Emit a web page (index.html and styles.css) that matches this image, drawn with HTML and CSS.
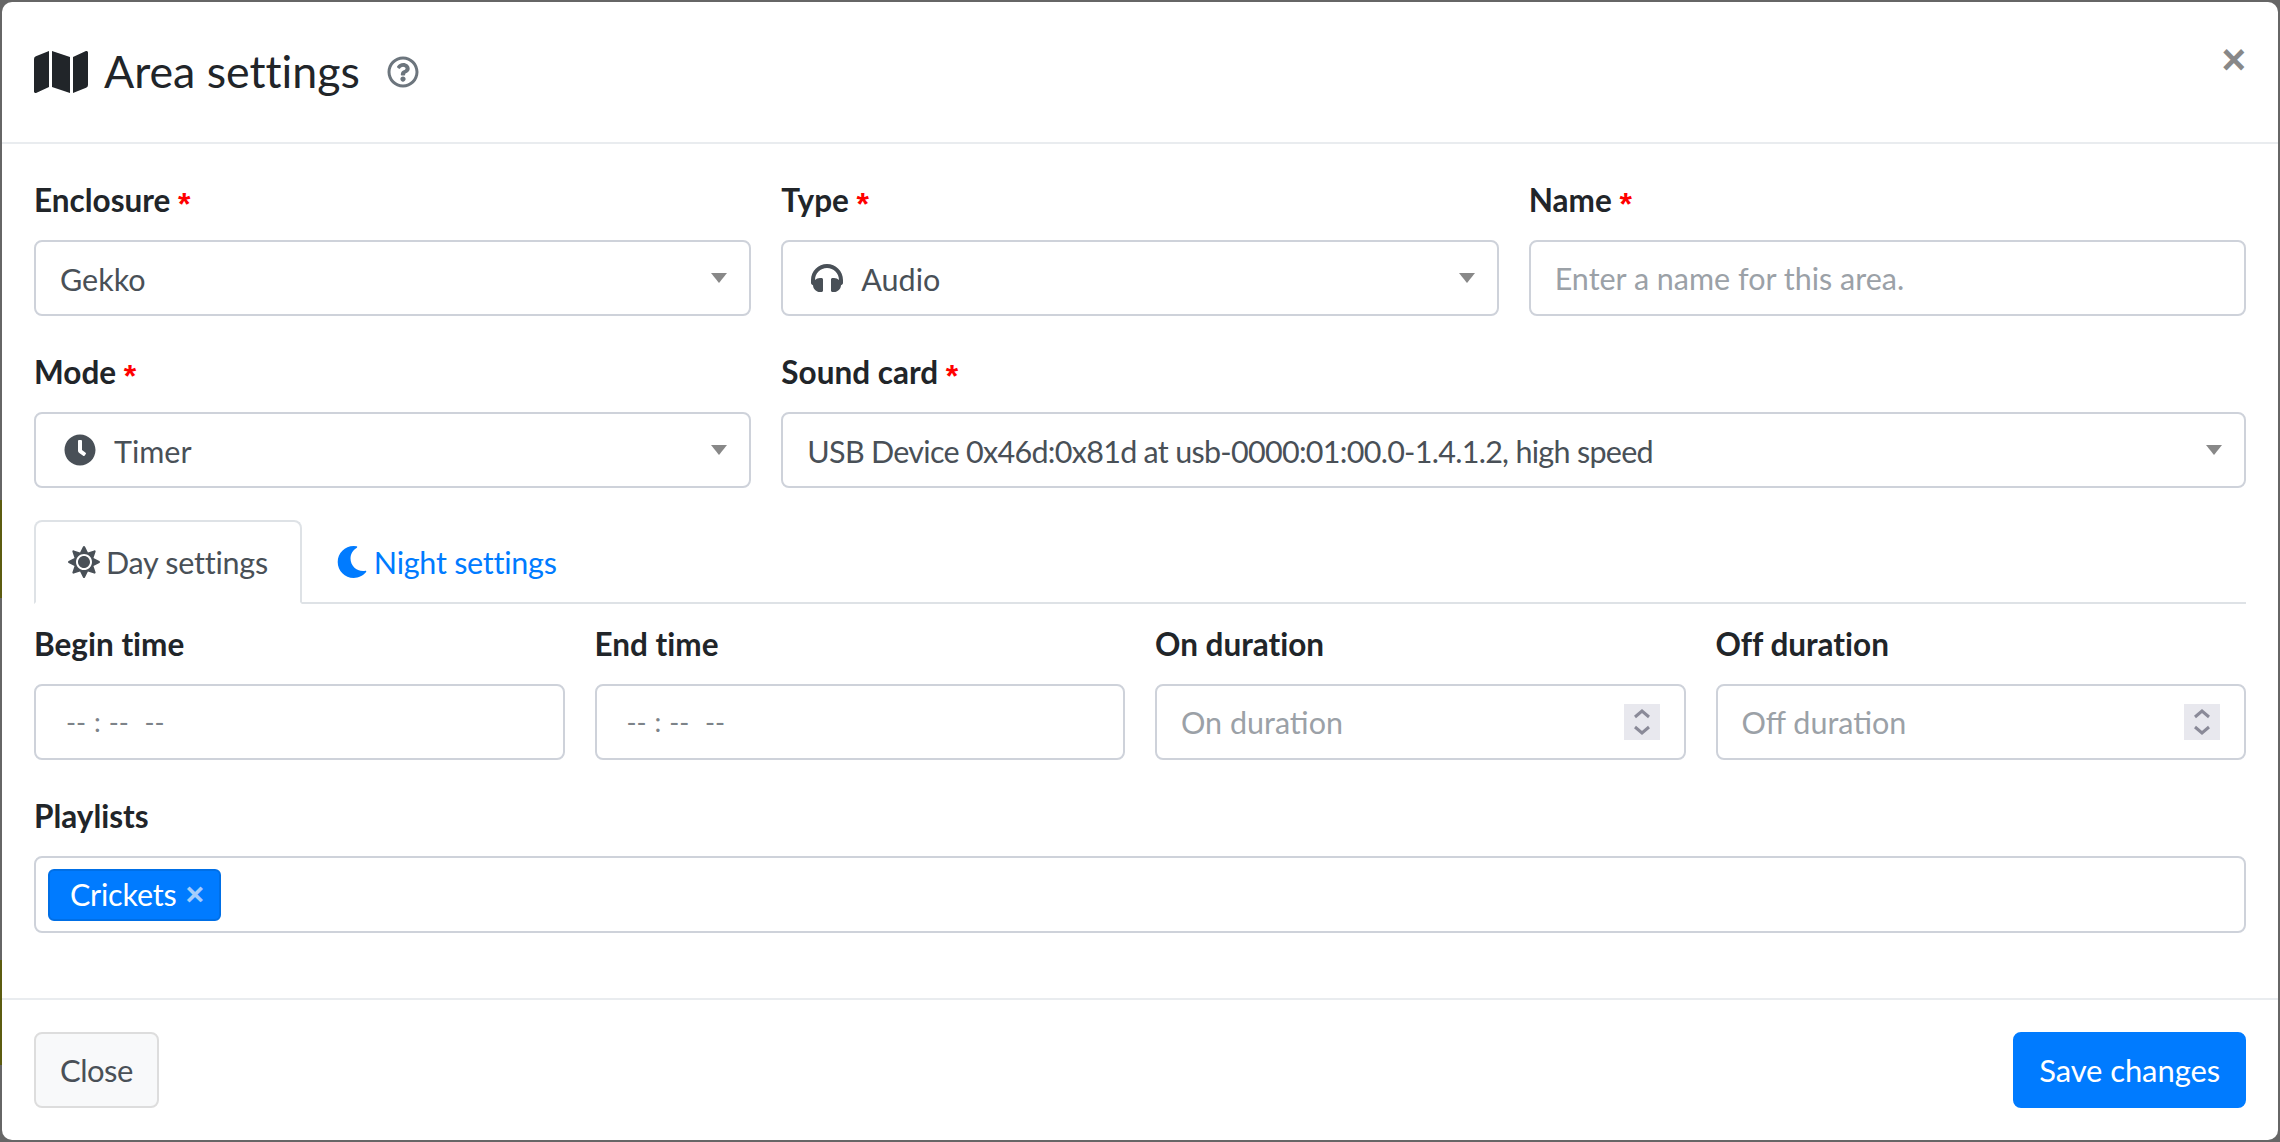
FILE: index.html
```html
<!DOCTYPE html>
<html lang="en">
<head>
    <meta charset="UTF-8">
    <meta name="viewport" content="width=device-width, initial-scale=1.0">
    <title>Area settings</title>

    <link rel="stylesheet" href="styles.css">
</head>
<body>
    <div class="modal">
        <div class="modal-header">
            <svg class="title-icon" viewBox="0 0 576 512"><path d="M0 117.66v346.32c0 11.32 11.43 19.06 21.94 14.86L160 416V32L20.12 87.95A32.006 32.006 0 0 0 0 117.66zM192 416l192 64V96L192 32v384zM554.06 33.16L416 96v384l139.88-55.95A31.996 31.996 0 0 0 576 394.34V48.02c0-11.32-11.43-19.06-21.94-14.86z"/></svg>
            <h5 class="modal-title">Area settings</h5>
            <svg class="help-icon" viewBox="0 0 512 512"><path d="M256 8C119.043 8 8 119.083 8 256c0 136.997 111.043 248 248 248s248-111.003 248-248C504 119.083 392.957 8 256 8zm0 448c-110.532 0-200-89.431-200-200 0-110.495 89.472-200 200-200 110.491 0 200 89.471 200 200 0 110.53-89.431 200-200 200zm107.244-255.2c0 67.052-72.421 68.084-72.421 92.863V300c0 6.627-5.373 12-12 12h-45.647c-6.627 0-12-5.373-12-12v-8.659c0-35.745 27.1-50.034 47.579-61.516 17.561-9.845 28.324-16.541 28.324-29.579 0-17.246-21.999-28.693-39.784-28.693-23.189 0-33.894 10.977-48.942 29.969-4.057 5.12-11.46 6.071-16.666 2.124l-27.824-21.098c-5.107-3.872-6.251-11.066-2.644-16.363C184.846 131.491 214.94 112 261.794 112c49.071 0 101.45 38.304 101.45 88.8zM298 368c0 23.159-18.841 42-42 42s-42-18.841-42-42 18.841-42 42-42 42 18.841 42 42z"/></svg>
            <button class="close" type="button">&times;</button>
        </div>

        <div class="modal-body">
            <div class="row row-3">
                <div class="form-group">
                    <label>Enclosure <span class="required">*</span></label>
                    <div class="select-box">
                        <span class="select-text">Gekko</span>
                        <span class="select-arrow"></span>
                    </div>
                </div>
                <div class="form-group">
                    <label>Type <span class="required">*</span></label>
                    <div class="select-box">
                        <svg class="select-icon" viewBox="0 0 512 512"><path d="M256 32C114.52 32 0 146.496 0 288v48a32 32 0 0 0 17.689 28.622l14.383 7.191C34.083 431.903 83.421 480 144 480h24c13.255 0 24-10.745 24-24V280c0-13.255-10.745-24-24-24h-24c-31.342 0-59.671 12.879-80 33.627V288c0-105.869 86.131-192 192-192s192 86.131 192 192v1.627C427.671 268.879 399.342 256 368 256h-24c-13.255 0-24 10.745-24 24v176c0 13.255 10.745 24 24 24h24c60.579 0 109.917-48.098 111.928-108.187l14.382-7.191A32 32 0 0 0 512 336v-48c0-141.504-114.52-256-256-256z"/></svg>
                        <span class="select-text">Audio</span>
                        <span class="select-arrow"></span>
                    </div>
                </div>
                <div class="form-group">
                    <label>Name <span class="required">*</span></label>
                    <input class="form-control" type="text" placeholder="Enter a name for this area.">
                </div>
            </div>

            <div class="row row-3">
                <div class="form-group">
                    <label>Mode <span class="required">*</span></label>
                    <div class="select-box">
                        <svg class="select-icon" viewBox="0 0 512 512"><path d="M256,8C119,8,8,119,8,256S119,504,256,504,504,393,504,256,393,8,256,8Zm92.49,313h0l-20,25a16,16,0,0,1-22.49,2.5h0l-67-49.72a40,40,0,0,1-15-31.23V112a16,16,0,0,1,16-16h32a16,16,0,0,1,16,16V256l58,42.5A16,16,0,0,1,348.49,321Z"/></svg>
                        <span class="select-text">Timer</span>
                        <span class="select-arrow"></span>
                    </div>
                </div>
                <div class="form-group span-2">
                    <label>Sound card <span class="required">*</span></label>
                    <div class="select-box">
                        <span class="select-text device-name">USB Device 0x46d:0x81d at usb-0000:01:00.0-1.4.1.2, high speed</span>
                        <span class="select-arrow"></span>
                    </div>
                </div>
            </div>

            <ul class="tabs">
                <li class="tab active">
                    <svg class="tab-icon" viewBox="0 0 512 512"><path d="M256 160c-52.9 0-96 43.1-96 96s43.1 96 96 96 96-43.1 96-96-43.1-96-96-96zm246.4 80.5l-94.7-47.3 33.5-100.4c4.5-13.6-8.4-26.5-21.9-21.9l-100.4 33.5-47.4-94.8c-6.4-12.8-24.6-12.8-31 0l-47.3 94.7L92.7 70.8c-13.6-4.5-26.5 8.4-21.9 21.9l33.5 100.4-94.7 47.4c-12.8 6.4-12.8 24.6 0 31l94.7 47.3-33.5 100.5c-4.5 13.6 8.4 26.5 21.9 21.9l100.4-33.5 47.3 94.7c6.4 12.8 24.6 12.8 31 0l47.3-94.7 100.4 33.5c13.6 4.5 26.5-8.4 21.9-21.9l-33.5-100.4 94.7-47.3c13-6.5 13-24.7.2-31.1zm-155.9 106c-49.9 49.9-131.1 49.9-181 0-49.9-49.9-49.9-131.1 0-181 49.9-49.9 131.1-49.9 181 0 49.9 49.9 49.9 131.1 0 181z"/></svg>
                    Day settings
                </li>
                <li class="tab">
                    <svg class="tab-icon" viewBox="0 0 512 512"><path d="M283.211 512c78.962 0 151.079-35.925 198.857-94.792 7.068-8.708-.639-21.43-11.562-19.35-124.203 23.654-238.262-71.576-238.262-196.954 0-72.222 38.662-138.635 101.498-174.394 9.686-5.512 7.25-20.197-3.756-22.23A258.156 258.156 0 0 0 283.211 0c-141.309 0-256 114.511-256 256 0 141.309 114.511 256 256 256z"/></svg>
                    Night settings
                </li>
            </ul>

            <div class="row row-4">
                <div class="form-group">
                    <label>Begin time</label>
                    <div class="time-box">-- : -- &nbsp;--</div>
                </div>
                <div class="form-group">
                    <label>End time</label>
                    <div class="time-box">-- : -- &nbsp;--</div>
                </div>
                <div class="form-group">
                    <label>On duration</label>
                    <div class="number-box">
                        <input type="text" placeholder="On duration">
                        <span class="spinner">
                            <svg viewBox="0 0 36 36"><path d="M11 13l7-6 7 6M11 23l7 6 7-6"/></svg>
                        </span>
                    </div>
                </div>
                <div class="form-group">
                    <label>Off duration</label>
                    <div class="number-box">
                        <input type="text" placeholder="Off duration">
                        <span class="spinner">
                            <svg viewBox="0 0 36 36"><path d="M11 13l7-6 7 6M11 23l7 6 7-6"/></svg>
                        </span>
                    </div>
                </div>
            </div>

            <div class="form-group">
                <label>Playlists</label>
                <div class="tag-box">
                    <span class="tag">Crickets <span class="tag-remove">&times;</span></span>
                </div>
            </div>
        </div>

        <div class="modal-footer">
            <button class="btn btn-light" type="button">Close</button>
            <button class="btn btn-primary" type="button">Save changes</button>
        </div>
    </div>
</body>
</html>
```

FILE: styles.css
```css
* {
    box-sizing: border-box;
}

html,
body {
    height: 100%;
}

body {
    margin: 0;
    padding: 2px;
    background: linear-gradient(#666 500px, #5c5c10 500px, #5c5c10 598px, #666 598px, #666 960px, #5c5c10 960px, #5c5c10 1065px, #666 1065px) 0 0 / 2px 100% no-repeat, #666;
    font-family: Lato, "Open Sans", sans-serif;
    font-size: 30.5px;
    line-height: 48px;
    color: #212529;
    font-variant-ligatures: none;
}

.modal {
    display: flex;
    flex-direction: column;
    height: 1138px;
    background-color: white;
    border-radius: 10px;
    overflow: hidden;
}

.modal-header {
    display: flex;
    flex-shrink: 0;
    align-items: center;
    height: 142px;
    padding: 0 32px;
    border-bottom: 2px solid #e9ecef;
}

.title-icon {
    width: 54px;
    height: 48px;
    fill: #212529;
}

.modal-title {
    margin: -2px 0 0 16px;
    font-size: 44.7px;
    font-weight: 400;
    line-height: 60px;
}

.help-icon {
    width: 32px;
    height: 32px;
    margin-left: 27px;
    fill: #6c757d;
}

.close {
    align-self: flex-start;
    margin: 37px 0 0 auto;
    padding: 0;
    border: none;
    background: none;
    font-family: "Liberation Sans", sans-serif;
    font-size: 42px;
    font-weight: bold;
    line-height: 1;
    color: #888;
    cursor: pointer;
}

.modal-body {
    flex: 1;
    padding: 32px;
}

.row {
    display: grid;
    column-gap: 30px;
}

.row-3 {
    grid-template-columns: repeat(3, 1fr);
}

.row-4 {
    grid-template-columns: repeat(4, 1fr);
}

.span-2 {
    grid-column: span 2;
}

.form-group {
    margin-bottom: 32px;
}

label {
    display: block;
    height: 48px;
    margin-bottom: 16px;
    font-size: 31.5px;
    font-weight: bold;
}

.required {
    font-family: "Liberation Sans", sans-serif;
    font-size: 32px;
    vertical-align: -3px;
    color: red;
}

.select-box,
.form-control,
.time-box,
.number-box {
    display: flex;
    align-items: center;
    width: 100%;
    height: 76px;
    padding: 0 24px;
    background-color: white;
    border: 2px solid #ced2da;
    border-radius: 8px;
    font-family: inherit;
    font-size: inherit;
    color: #495057;
}

.select-box {
    padding-right: 22px;
}

.select-icon {
    width: 32px;
    height: 32px;
    margin-left: 4px;
    margin-right: 18px;
    fill: #495057;
}

.select-text {
    flex: 1;
    margin-top: 2px;
}

.device-name {
    letter-spacing: -0.71px;
}

.select-arrow {
    width: 0;
    height: 0;
    border-style: solid;
    border-width: 10px 8px 0 8px;
    border-color: #888 transparent transparent transparent;
}

input::placeholder {
    color: #9ba1a7;
    opacity: 1;
}

.time-box {
    padding-left: 30px;
    font-size: 27px;
    color: #7d8389;
    word-spacing: 1px;
}

.number-box input {
    flex: 1;
    min-width: 0;
    padding: 0;
    border: none;
    outline: none;
    font-family: inherit;
    font-size: inherit;
}

.spinner {
    width: 36px;
    height: 36px;
    background-color: #e8e8ee;
}

.spinner svg {
    display: block;
    width: 36px;
    height: 36px;
    fill: none;
    stroke: #8a8a98;
    stroke-width: 3;
}

.tabs {
    display: flex;
    margin: 0 0 16px 0;
    padding: 0;
    list-style: none;
    border-bottom: 2px solid #dee2e6;
}

.tab {
    display: flex;
    align-items: center;
    margin-bottom: -2px;
    padding: 16px 32px;
    border: 2px solid transparent;
    border-radius: 8px 8px 0 0;
    color: #007bff;
    letter-spacing: -0.25px;
}

.tab.active {
    background-color: white;
    border-color: #dee2e6 #dee2e6 white;
    color: #495057;
}

.tab-icon {
    width: 32px;
    height: 32px;
    margin-right: 6px;
    fill: currentColor;
}

.tag-box {
    display: flex;
    align-items: center;
    height: 77px;
    padding: 0 12px;
    border: 2px solid #ced2da;
    border-radius: 8px;
}

.tag {
    display: flex;
    align-items: center;
    gap: 9px;
    height: 52px;
    padding: 0 15px 2px 20px;
    background-color: #007bff;
    border: 2px solid #006fe6;
    border-radius: 6px;
    color: white;
    letter-spacing: -0.2px;
}

.tag-remove {
    font-family: "Liberation Sans", sans-serif;
    font-size: 32px;
    font-weight: bold;
    color: #a5cdfb;
}

.modal-footer {
    display: flex;
    justify-content: space-between;
    padding: 32px;
    border-top: 2px solid #e9ecef;
}

.btn {
    height: 76px;
    padding: 0 24px;
    border: 2px solid transparent;
    border-radius: 8px;
    font-family: inherit;
    font-size: 31px;
    cursor: pointer;
}

.btn-light {
    background-color: #f8f9fa;
    border-color: #ddd;
    color: #495057;
    letter-spacing: -0.5px;
}

.btn-primary {
    background-color: #007bff;
    border-color: #007bff;
    color: white;
    letter-spacing: -0.1px;
}
```
